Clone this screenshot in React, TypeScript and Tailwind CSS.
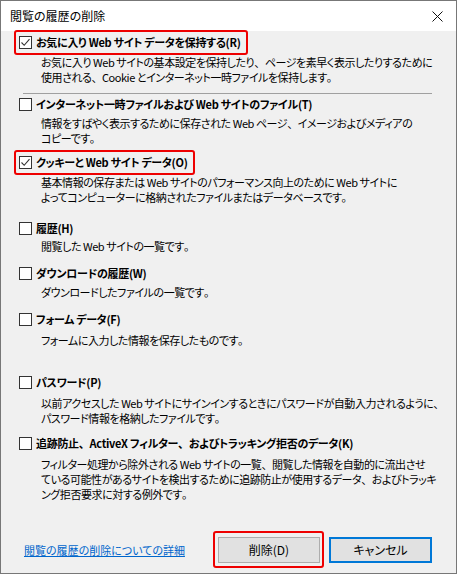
import React from 'react';

const jp = "font-['Yu_Gothic_UI','Noto_Sans_CJK_JP',sans-serif] [font-feature-settings:'palt']";

// keep the ideographic comma/period full width like the original dialog font
const fw = (s: string) =>
  s.split(/([、。])/).map((p, i) =>
    p === '、' || p === '。' ? (
      <span key={i} className="[font-feature-settings:normal]">
        {p}
      </span>
    ) : (
      p
    )
  );

const Box: React.FC<{ checked?: boolean }> = ({ checked }) => (
  <span className="w-[13px] h-[13px] shrink-0 border border-[#333333] bg-white flex items-center justify-center">
    {checked && (
      <svg width="11" height="11" viewBox="0 0 11 11">
        <path d="M1.5 5.5 L4.2 8.3 L9.5 2.2" fill="none" stroke="#333333" strokeWidth="1.1" />
      </svg>
    )}
  </span>
);

type Item = {
  label: string;
  lines: string[];
  checked?: boolean;
  marked?: boolean;
  rowMt: string;
  descMt: string;
};

const items: Item[] = [
  {
    label: 'インターネット一時ファイルおよび Web サイトのファイル(T)',
    lines: ['情報をすばやく表示するために保存された Web ページ、イメージおよびメディアの', 'コピーです。'],
    rowMt: 'mt-[2px]',
    descMt: 'mt-[3px]',
  },
  {
    label: 'クッキーと Web サイト データ(O)',
    lines: ['基本情報の保存または Web サイトのパフォーマンス向上のために Web サイトに', 'よってコンピューターに格納されたファイルまたはデータベースです。'],
    checked: true,
    marked: true,
    rowMt: 'mt-[8px]',
    descMt: 'mt-[4px]',
  },
  {
    label: '履歴(H)',
    lines: ['閲覧した Web サイトの一覧です。'],
    rowMt: 'mt-[15px]',
    descMt: 'mt-[2px]',
  },
  {
    label: 'ダウンロードの履歴(W)',
    lines: ['ダウンロードしたファイルの一覧です。'],
    rowMt: 'mt-[11px]',
    descMt: 'mt-[3px]',
  },
  {
    label: 'フォーム データ(F)',
    lines: ['フォームに入力した情報を保存したものです。'],
    rowMt: 'mt-[11px]',
    descMt: 'mt-[5px]',
  },
  {
    label: 'パスワード(P)',
    lines: ['以前アクセスした Web サイトにサインインするときにパスワードが自動入力されるように、', 'パスワード情報を格納したファイルです。'],
    rowMt: 'mt-[26px]',
    descMt: 'mt-[5px]',
  },
  {
    label: '追跡防止、ActiveX フィルター、およびトラッキング拒否のデータ(K)',
    lines: [
      'フィルター処理から除外される Web サイトの一覧、閲覧した情報を自動的に流出させ',
      'ている可能性があるサイトを検出するために追跡防止が使用するデータ、およびトラッキ',
      'ング拒否要求に対する例外です。',
    ],
    rowMt: 'mt-[9px]',
    descMt: 'mt-[5px]',
  },
];

const Row: React.FC<{ label: string; checked?: boolean; marked?: boolean; className?: string }> = ({
  label,
  checked,
  marked,
  className = '',
}) => (
  <div className={`flex ${className}`}>
    <div className="relative flex items-center gap-[4px] h-[17px]">
      <Box checked={checked} />
      <span className="font-bold whitespace-nowrap tracking-[-0.3px]">{fw(label)}</span>
      {marked && (
        <span className="absolute -left-[5px] -right-[7px] -top-[4px] -bottom-[4px] border-2 border-[#ee0000] rounded-[3px]" />
      )}
    </div>
  </div>
);

const Desc: React.FC<{ lines: string[]; className?: string }> = ({ lines, className = '' }) => (
  <div className={`pl-[22px] leading-[15px] tracking-[-0.45px] ${className}`}>
    {lines.map((l) => (
      <div key={l} className="whitespace-nowrap">
        {fw(l)}
      </div>
    ))}
  </div>
);

export default function App() {
  return (
    <div className={`w-[457px] h-[574px] border border-[#777777] bg-[#f0f0f0] text-black text-[11px] flex flex-col ${jp}`}>
      {/* Title bar */}
      <div className="h-[30px] bg-white flex items-center justify-between pl-[9px] pr-[13px] shrink-0">
        <span className="text-[12px] -mt-[1px]">閲覧の履歴の削除</span>
        <svg width="11" height="11" viewBox="0 0 11 11">
          <path d="M0.5 0.5 L10.5 10.5 M10.5 0.5 L0.5 10.5" stroke="#111111" strokeWidth="1" />
        </svg>
      </div>

      <div className="flex-1 flex flex-col pl-[18px] pr-[24px] pt-[3px]">
        <Row label="お気に入り Web サイト データを保持する(R)" checked marked />
        <Desc
          className="mt-[4px]"
          lines={[
            'お気に入り Web サイトの基本設定を保持したり、ページを素早く表示したりするために',
            '使用される、Cookie とインターネット一時ファイルを保持します。',
          ]}
        />
        <div className="mt-[8px] ml-[4px] h-px bg-[#a0a0a0]" />

        {items.map((it) => (
          <React.Fragment key={it.label}>
            <Row label={it.label} checked={it.checked} marked={it.marked} className={it.rowMt} />
            <Desc lines={it.lines} className={it.descMt} />
          </React.Fragment>
        ))}

        {/* Footer */}
        <div className="mt-[35px] flex items-center justify-between">
          <a href="#" className="ml-[5px] text-[#0066cc] underline text-[11px]">
            閲覧の履歴の削除についての詳細
          </a>
          <div className="flex gap-[9px]">
            <div className="relative">
              <button className="w-[102px] h-[26px] bg-[#e1e1e1] border border-[#adadad] text-[12px]">
                削除(D)
              </button>
              <span className="absolute -left-[5px] -right-[4px] -top-[6px] -bottom-[5px] border-2 border-[#ee0000] rounded-[3px]" />
            </div>
            <button className="w-[103px] h-[26px] bg-[#e1e1e1] border-2 border-[#0078d7] text-[12px]">
              キャンセル
            </button>
          </div>
        </div>
      </div>
    </div>
  );
}
